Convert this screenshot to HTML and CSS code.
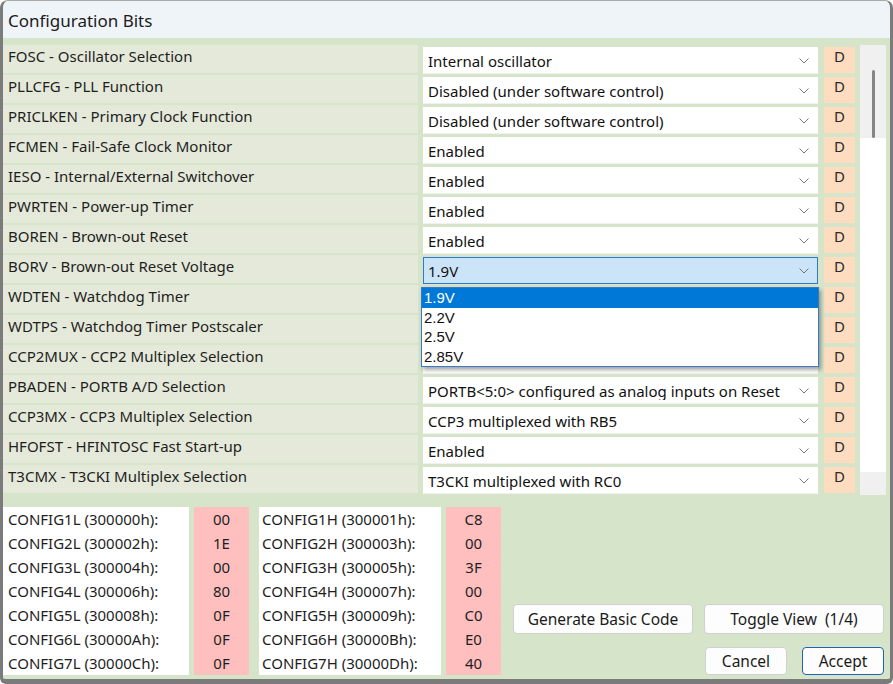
FILE: index.html
```html
<!DOCTYPE html>
<html lang="en">
<head>
    <meta charset="UTF-8">
    <title>Configuration Bits</title>
    <link rel="stylesheet" href="styles.css">
</head>
<body>
    <div class="window">
        <div class="titlebar">Configuration Bits</div>

        <div class="content">
            <div class="settings">
                <div class="rows">
                    <div class="row">
                        <div class="label">FOSC - Oscillator Selection</div>
                        <div class="combo"><span class="value">Internal oscillator</span><svg class="chevron" width="10" height="6" viewBox="0 0 10 6"><polyline points="0.5,0.5 5,5 9.5,0.5"/></svg></div>
                        <div class="flag">D</div>
                    </div>
                    <div class="row">
                        <div class="label">PLLCFG - PLL Function</div>
                        <div class="combo"><span class="value">Disabled (under software control)</span><svg class="chevron" width="10" height="6" viewBox="0 0 10 6"><polyline points="0.5,0.5 5,5 9.5,0.5"/></svg></div>
                        <div class="flag">D</div>
                    </div>
                    <div class="row">
                        <div class="label">PRICLKEN - Primary Clock Function</div>
                        <div class="combo"><span class="value">Disabled (under software control)</span><svg class="chevron" width="10" height="6" viewBox="0 0 10 6"><polyline points="0.5,0.5 5,5 9.5,0.5"/></svg></div>
                        <div class="flag">D</div>
                    </div>
                    <div class="row">
                        <div class="label">FCMEN - Fail-Safe Clock Monitor</div>
                        <div class="combo"><span class="value">Enabled</span><svg class="chevron" width="10" height="6" viewBox="0 0 10 6"><polyline points="0.5,0.5 5,5 9.5,0.5"/></svg></div>
                        <div class="flag">D</div>
                    </div>
                    <div class="row">
                        <div class="label">IESO - Internal/External Switchover</div>
                        <div class="combo"><span class="value">Enabled</span><svg class="chevron" width="10" height="6" viewBox="0 0 10 6"><polyline points="0.5,0.5 5,5 9.5,0.5"/></svg></div>
                        <div class="flag">D</div>
                    </div>
                    <div class="row">
                        <div class="label">PWRTEN - Power-up Timer</div>
                        <div class="combo"><span class="value">Enabled</span><svg class="chevron" width="10" height="6" viewBox="0 0 10 6"><polyline points="0.5,0.5 5,5 9.5,0.5"/></svg></div>
                        <div class="flag">D</div>
                    </div>
                    <div class="row">
                        <div class="label">BOREN - Brown-out Reset</div>
                        <div class="combo"><span class="value">Enabled</span><svg class="chevron" width="10" height="6" viewBox="0 0 10 6"><polyline points="0.5,0.5 5,5 9.5,0.5"/></svg></div>
                        <div class="flag">D</div>
                    </div>
                    <div class="row">
                        <div class="label">BORV - Brown-out Reset Voltage</div>
                        <div class="combo open">
                            <span class="value">1.9V</span><svg class="chevron" width="10" height="6" viewBox="0 0 10 6"><polyline points="0.5,0.5 5,5 9.5,0.5"/></svg>
                            <ul class="dropdown">
                                <li class="selected">1.9V</li>
                                <li>2.2V</li>
                                <li>2.5V</li>
                                <li>2.85V</li>
                            </ul>
                        </div>
                        <div class="flag">D</div>
                    </div>
                    <!-- the next three combos sit under the open list -->
                    <div class="row">
                        <div class="label">WDTEN - Watchdog Timer</div>
                        <div class="combo"><span class="value"></span><svg class="chevron" width="10" height="6" viewBox="0 0 10 6"><polyline points="0.5,0.5 5,5 9.5,0.5"/></svg></div>
                        <div class="flag">D</div>
                    </div>
                    <div class="row">
                        <div class="label">WDTPS - Watchdog Timer Postscaler</div>
                        <div class="combo"><span class="value"></span><svg class="chevron" width="10" height="6" viewBox="0 0 10 6"><polyline points="0.5,0.5 5,5 9.5,0.5"/></svg></div>
                        <div class="flag">D</div>
                    </div>
                    <div class="row">
                        <div class="label">CCP2MUX - CCP2 Multiplex Selection</div>
                        <div class="combo"><span class="value"></span><svg class="chevron" width="10" height="6" viewBox="0 0 10 6"><polyline points="0.5,0.5 5,5 9.5,0.5"/></svg></div>
                        <div class="flag">D</div>
                    </div>
                    <div class="row">
                        <div class="label">PBADEN - PORTB A/D Selection</div>
                        <div class="combo"><span class="value">PORTB&lt;5:0&gt; configured as analog inputs on Reset</span><svg class="chevron" width="10" height="6" viewBox="0 0 10 6"><polyline points="0.5,0.5 5,5 9.5,0.5"/></svg></div>
                        <div class="flag">D</div>
                    </div>
                    <div class="row">
                        <div class="label">CCP3MX - CCP3 Multiplex Selection</div>
                        <div class="combo"><span class="value">CCP3 multiplexed with RB5</span><svg class="chevron" width="10" height="6" viewBox="0 0 10 6"><polyline points="0.5,0.5 5,5 9.5,0.5"/></svg></div>
                        <div class="flag">D</div>
                    </div>
                    <div class="row">
                        <div class="label">HFOFST - HFINTOSC Fast Start-up</div>
                        <div class="combo"><span class="value">Enabled</span><svg class="chevron" width="10" height="6" viewBox="0 0 10 6"><polyline points="0.5,0.5 5,5 9.5,0.5"/></svg></div>
                        <div class="flag">D</div>
                    </div>
                    <div class="row">
                        <div class="label">T3CMX - T3CKI Multiplex Selection</div>
                        <div class="combo"><span class="value">T3CKI multiplexed with RC0</span><svg class="chevron" width="10" height="6" viewBox="0 0 10 6"><polyline points="0.5,0.5 5,5 9.5,0.5"/></svg></div>
                        <div class="flag">D</div>
                    </div>
                </div>

                <div class="scrollbar">
                    <div class="track-top"><div class="thumb"></div></div>
                    <div class="track-mid"></div>
                    <div class="track-bottom"></div>
                </div>
            </div>

            <div class="bottom">
                <div class="registers">
                    <div class="reg-name">CONFIG1L (300000h):</div><div class="reg-value">00</div>
                    <div class="reg-name high">CONFIG1H (300001h):</div><div class="reg-value">C8</div>
                    <div class="reg-name">CONFIG2L (300002h):</div><div class="reg-value">1E</div>
                    <div class="reg-name high">CONFIG2H (300003h):</div><div class="reg-value">00</div>
                    <div class="reg-name">CONFIG3L (300004h):</div><div class="reg-value">00</div>
                    <div class="reg-name high">CONFIG3H (300005h):</div><div class="reg-value">3F</div>
                    <div class="reg-name">CONFIG4L (300006h):</div><div class="reg-value">80</div>
                    <div class="reg-name high">CONFIG4H (300007h):</div><div class="reg-value">00</div>
                    <div class="reg-name">CONFIG5L (300008h):</div><div class="reg-value">0F</div>
                    <div class="reg-name high">CONFIG5H (300009h):</div><div class="reg-value">C0</div>
                    <div class="reg-name">CONFIG6L (30000Ah):</div><div class="reg-value">0F</div>
                    <div class="reg-name high">CONFIG6H (30000Bh):</div><div class="reg-value">E0</div>
                    <div class="reg-name">CONFIG7L (30000Ch):</div><div class="reg-value">0F</div>
                    <div class="reg-name high">CONFIG7H (30000Dh):</div><div class="reg-value">40</div>
                </div>

                <div class="actions">
                    <div class="action-row">
                        <button class="btn wide">Generate Basic Code</button>
                        <button class="btn wide">Toggle View&nbsp; (1/4)</button>
                    </div>
                    <div class="action-row end">
                        <button class="btn small">Cancel</button>
                        <button class="btn small default">Accept</button>
                    </div>
                </div>
            </div>
        </div>
    </div>
</body>
</html>
```

FILE: styles.css
```css
* {
    box-sizing: border-box;
}

body {
    margin: 0;
    background-color: #ffffff;
    font-family: "Noto Sans", sans-serif;
    color: #1e1e1e;
}

.window {
    width: 893px;
    height: 684px;
    display: flex;
    flex-direction: column;
    background-color: #d6e4ca;
    border: 3px solid #7b7b7b;
    border-top: 1px solid #a9a9a9;
    border-bottom-width: 5px;
    border-radius: 8px 8px 6px 6px;
    overflow: hidden;
}

.titlebar {
    height: 37px;
    flex-shrink: 0;
    display: flex;
    align-items: center;
    padding: 2px 0 0 5px;
    background-color: #eff4f9;
    font-size: 17px;
    color: #1b1b1b;
}

.content {
    flex: 1;
    padding-top: 7px;
}

/* settings list */
.settings {
    display: flex;
}

.rows {
    display: flex;
    flex-direction: column;
}

.row {
    display: grid;
    grid-template-columns: 415px 395px 32px;
    column-gap: 5px;
    height: 30px;
    font-size: 15px;
    line-height: 18px;
}

.label {
    height: 28px;
    padding: 2px 0 0 5px;
    background-color: #e5e9da;
    white-space: nowrap;
}

.combo {
    position: relative;
    height: 27px;
    margin-top: 2px;
    display: flex;
    align-items: center;
    padding: 1px 8px 0 4px;
    background-color: #ffffff;
    border: 1px solid #ffffff;
    border-bottom-color: #f1f1f1;
}

.combo .value {
    flex: 1;
    overflow: hidden;
    white-space: nowrap;
    color: #111;
}

.chevron {
    flex-shrink: 0;
    margin-left: 6px;
    fill: none;
    stroke: #757575;
    stroke-width: 1;
}

.combo.open {
    background-color: #cce4f7;
    border-color: #2a7bd4;
}

.dropdown {
    position: absolute;
    top: calc(100% + 4px);
    left: -3px;
    right: -2px;
    z-index: 2;
    margin: 0;
    padding: 0;
    list-style: none;
    background-color: #ffffff;
    border: 1px solid #3b78c6;
    box-shadow: 2px 3px 4px rgba(0, 0, 0, 0.35);
    font-family: "Liberation Sans", sans-serif;
    font-size: 15px;
}

.dropdown li {
    height: 19.5px;
    line-height: 19.5px;
    padding-left: 2px;
    color: #111;
}

.dropdown li.selected {
    background-color: #0078d7;
    color: #ffffff;
}

.flag {
    height: 26px;
    margin: 2px 0 0 1px;
    text-align: center;
    background-color: #fddcc0;
    color: #2a2a2a;
}

/* scrollbar */
.scrollbar {
    width: 26px;
    margin-left: 5px;
    display: flex;
    flex-direction: column;
    background-color: #ffffff;
}

.track-top {
    height: 93px;
    padding: 25px 0 0 12px;
    background-color: #f0f0f0;
}

.thumb {
    width: 3px;
    height: 68px;
    border-radius: 2px;
    background-color: #858585;
}

.track-mid {
    flex: 1;
}

.track-bottom {
    height: 23px;
    background-color: #f0f0f0;
}

/* register values */
.bottom {
    display: flex;
    margin-top: 12px;
}

.registers {
    display: grid;
    grid-template-columns: 186px 55px 187px 55px;
    column-gap: 5px;
    font-size: 15px;
    line-height: 24px;
}

.reg-name {
    padding-left: 5px;
    background-color: #ffffff;
    white-space: nowrap;
}

.reg-name.high {
    margin-left: 5px;
    padding-left: 3px;
}

.reg-value {
    text-align: center;
    background-color: #ffbfbf;
}

.actions {
    width: 371px;
    margin-left: 12px;
    display: flex;
    flex-direction: column;
    justify-content: flex-end;
    gap: 13px;
}

.action-row {
    display: flex;
    gap: 11px;
}

.action-row.end {
    justify-content: flex-end;
    gap: 15px;
}

.btn {
    height: 30px;
    padding: 0;
    background-color: #fdfdfd;
    border: 1px solid #d0d0d0;
    border-radius: 4px;
    font-family: "Noto Sans", sans-serif;
    font-size: 15.5px;
    color: #1a1a1a;
}

.btn.wide {
    width: 180px;
}

.btn.small {
    width: 82px;
    height: 28px;
}

.btn.default {
    border-color: #1f63b5;
}
```
